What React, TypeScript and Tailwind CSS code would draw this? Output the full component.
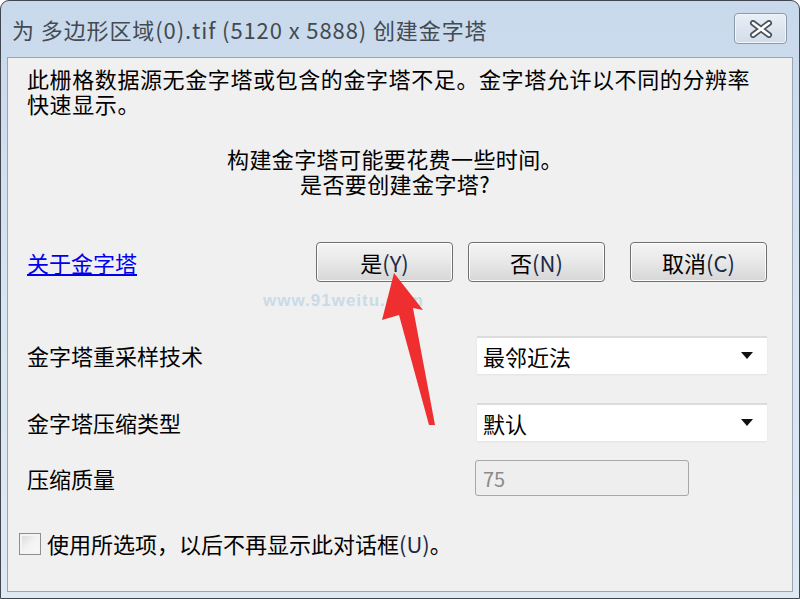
const FONT = '"Noto Sans CJK SC", "Liberation Sans", sans-serif';

function Caret() {
  return (
    <svg width="12" height="8" viewBox="0 0 12 8">
      <polygon points="0,0 12,0 6,7" fill="#111" />
    </svg>
  );
}

function DialogButton({ label, hot, className }: { label: string; hot: string; className?: string }) {
  return (
    <button
      className={
        'h-[40px] w-[137px] rounded-[4px] border border-[#707070] bg-gradient-to-b from-[#f4f4f4] via-[#e8e8e8] to-[#d6d6d6] text-[22px] tracking-normal text-black shadow-[inset_0_0_0_1px_#fcfcfc] ' +
        (className ?? '')
      }
    >
      {label}
      <span className="text-[#1c2a44]">{hot}</span>
    </button>
  );
}

function Select({ value }: { value: string }) {
  return (
    <div className="flex h-[38px] w-[290px] items-center justify-between border-t-2 border-[#dcdcdc] bg-white pl-[6px] pr-[14px] text-[22px] shadow-[0_1px_2px_#e2e2e2]">
      <span>{value}</span>
      <Caret />
    </div>
  );
}

export default function App() {
  return (
    <div className="h-[599px] w-[800px] overflow-hidden bg-white" style={{ fontFamily: FONT }}>
      <div className="relative flex h-full w-full flex-col rounded-t-[9px] border border-[#3f4650] bg-gradient-to-b from-[#c8d9ec] via-[#d8e4f1] to-[#dfe9f4] px-[6px] pb-[6px]">
        {/* Title bar */}
        <div className="flex h-[56px] items-center justify-between">
          <span className="pl-[5px] text-[22px] tracking-[0.9px] text-[#434a52]">为 多边形区域(0).tif (5120 x 5888) 创建金字塔</span>
          <div className="mr-[6px] mt-[-1px] flex h-[31px] w-[53px] items-center justify-center rounded-[4px] border border-[#8c99a8] bg-gradient-to-b from-[#e9eff6] to-[#d2dde9] shadow-[inset_0_0_0_1px_#f2f6fa]">
            <svg width="26" height="18" viewBox="0 0 26 18">
              <path d="M5 3 L21 15 M21 3 L5 15" stroke="#4b535c" strokeWidth="6" strokeLinecap="round" />
              <path d="M5 3 L21 15 M21 3 L5 15" stroke="#ffffff" strokeWidth="2.6" strokeLinecap="round" />
            </svg>
          </div>
        </div>

        {/* Client area */}
        <div className="relative flex flex-1 flex-col border border-[#9aa6b4] bg-[#f0f0f0] pl-[19px] pr-[25px] pt-[8px] text-[22px] leading-[25px] text-black">
          <p className="tracking-[0.6px]">
            此栅格数据源无金字塔或包含的金字塔不足。金字塔允许以不同的分辨率
            <br />
            快速显示。
          </p>
          <p className="mt-[30px] pr-[4px] text-center tracking-[0.4px]">
            构建金字塔可能要花费一些时间。
            <br />
            是否要创建金字塔?
          </p>

          <div className="mt-[46px] flex items-center">
            <a className="text-[#0000ee] underline underline-offset-2">关于金字塔</a>
            <DialogButton label="是" hot="(Y)" className="ml-auto" />
            <DialogButton label="否" hot="(N)" className="ml-[15px]" />
            <DialogButton label="取消" hot="(C)" className="ml-[25px]" />
          </div>

          <div className="mt-[54px] grid grid-cols-[1fr_290px] items-center gap-y-[29px]">
            <span>金字塔重采样技术</span>
            <Select value="最邻近法" />
            <span>金字塔压缩类型</span>
            <Select value="默认" />
          </div>
          <div className="mt-[19px] grid grid-cols-[1fr_292px] items-center">
            <span>压缩质量</span>
            <div className="flex h-[36px] w-[214px] items-center rounded-[3px] border border-[#a8a8a8] bg-[#eeeeee] pl-[7px] text-[20px] text-[#8a8a8a]">
              75
            </div>
          </div>

          <label className="ml-[-8px] mt-[35px] flex items-center gap-[6px]">
            <span className="h-[22px] w-[22px] border border-[#8e8e8e] bg-gradient-to-br from-[#d8d8d8] via-[#f2f2f2] to-[#fafafa] shadow-[inset_0_0_0_2px_#f4f4f4]" />
            <span>
              使用所选项，以后不再显示此对话框<span className="text-[#1c2a44]">(U)</span>。
            </span>
          </label>

          {/* watermark */}
          <span className="absolute left-[255px] top-[230px] text-[17px] font-bold tracking-[1px] text-[#c9dbe9]" style={{ fontFamily: '"Liberation Sans", sans-serif' }}>
            www.91weitu.com
          </span>
        </div>

        {/* red arrow annotation */}
        <svg className="absolute left-0 top-0" width="800" height="599" viewBox="0 0 800 599">
          <polygon points="393,272 422,309 412,307 434,424 428,424 398,314 381,319" fill="#ef2f2f" />
        </svg>
      </div>
    </div>
  );
}
